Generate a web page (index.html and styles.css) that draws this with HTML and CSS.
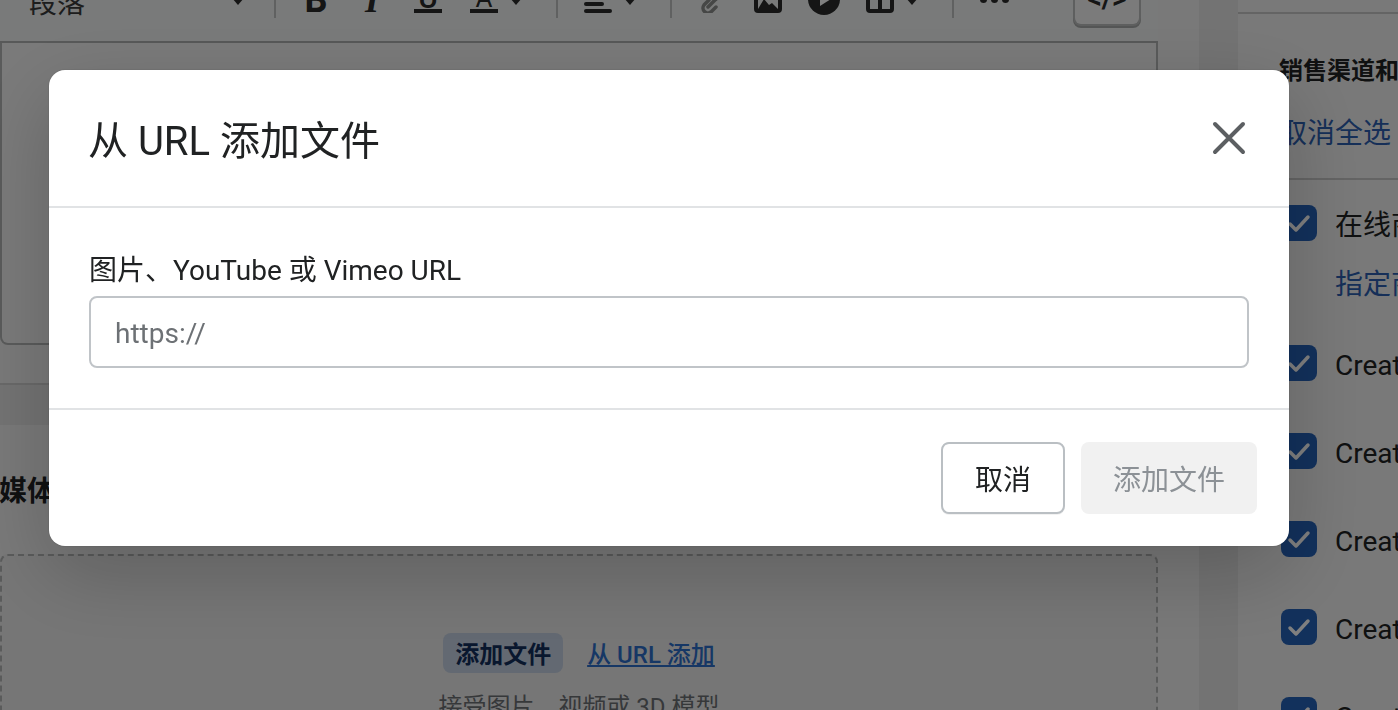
FILE: index.html
```html
<!DOCTYPE html>
<html lang="zh-CN">
<head>
    <meta charset="UTF-8">
    <meta name="viewport" content="width=device-width, initial-scale=1.0">
    <title>从 URL 添加文件</title>
    <link rel="stylesheet" href="styles.css">
</head>
<body>
    <div class="page">
        <div class="main">
            <div class="card card-top">
                <div class="editor">
                    <div class="toolbar">
                        <div class="select">
                            <span class="select-text">段落</span>
                            <span class="caret"></span>
                        </div>
                        <div class="sep"></div>

                        <div class="tool"><span class="glyph bold">B</span></div>
                        <div class="tool"><span class="glyph italic">I</span></div>
                        <div class="tool"><span class="glyph under">U</span></div>
                        <div class="tool tool-wide">
                            <span class="glyph under under-a">A</span>
                            <span class="caret caret-tool"></span>
                        </div>
                        <div class="sep"></div>

                        <div class="tool tool-wide">
                            <svg class="icon" width="28" height="32" viewBox="0 0 28 32" fill="#2a2b2b">
                                <rect x="0" y="14" width="28" height="4" rx="2"/>
                                <rect x="0" y="21" width="20" height="4" rx="2"/>
                                <rect x="0" y="28" width="28" height="4" rx="2"/>
                            </svg>
                            <span class="caret caret-tool"></span>
                        </div>
                        <div class="sep"></div>

                        <div class="tool">
                            <svg class="icon" width="26" height="32" viewBox="0 0 26 32" fill="none" stroke="#8c8e8d" stroke-width="3.5" stroke-linecap="round">
                                <path d="M10 19l-5 5a5 5 0 0 0 7 7l5-5"/>
                                <path d="M9 26l10-10"/>
                                <path d="M17 18l5-5"/>
                            </svg>
                        </div>
                        <div class="tool">
                            <svg class="icon" width="28" height="32" viewBox="0 0 28 32" fill="none" stroke="#2a2b2b" stroke-width="4">
                                <rect x="2" y="2" width="24" height="28" rx="2"/>
                                <path d="M4 28l6-10 5 6 3-2 6 6z" fill="#2a2b2b" stroke="none"/>
                            </svg>
                        </div>
                        <div class="tool">
                            <svg class="icon icon-low" width="32" height="32" viewBox="0 0 32 32">
                                <circle cx="16" cy="16" r="16" fill="#2a2b2b"/>
                                <path d="M12 9l11 7-11 7z" fill="#fff"/>
                            </svg>
                        </div>
                        <div class="tool tool-wide">
                            <svg class="icon" width="28" height="32" viewBox="0 0 28 32" fill="none" stroke="#2a2b2b" stroke-width="4">
                                <rect x="2" y="2" width="24" height="28" rx="2"/>
                                <path d="M14 2v28M2 10h24"/>
                            </svg>
                            <span class="caret caret-tool"></span>
                        </div>
                        <div class="sep"></div>

                        <div class="tool">
                            <div class="dots"><span></span><span></span><span></span></div>
                        </div>
                        <div class="code-btn"><span>&lt;/&gt;</span></div>
                    </div>
                </div>
            </div>

            <div class="card card-media">
                <h2 class="media-title">媒体</h2>
                <div class="dropzone">
                    <div class="drop-actions">
                        <span class="drop-add">添加文件</span>
                        <a href="#" class="drop-url">从 URL 添加</a>
                    </div>
                    <div class="drop-hint">接受图片、视频或 3D 模型</div>
                </div>
            </div>
        </div>

        <div class="aside">
            <div class="aside-top"></div>
            <div class="aside-head">
                <div class="aside-title">销售渠道和</div>
                <a href="#" class="aside-link">取消全选</a>
            </div>
            <div class="channels">
                <div class="channel">
                    <div class="check-row">
                        <span class="check"><svg width="36" height="36" viewBox="0 0 36 36"><path d="M9 19l6 6 12-13" fill="none" stroke="#fff" stroke-width="3.5" stroke-linecap="round" stroke-linejoin="round"/></svg></span>
                        <span class="check-text">在线商店</span>
                    </div>
                    <a href="#" class="channel-link">指定商品</a>
                </div>
                <div class="channel">
                    <div class="check-row">
                        <span class="check"><svg width="36" height="36" viewBox="0 0 36 36"><path d="M9 19l6 6 12-13" fill="none" stroke="#fff" stroke-width="3.5" stroke-linecap="round" stroke-linejoin="round"/></svg></span>
                        <span class="check-text">Create</span>
                    </div>
                </div>
                <div class="channel">
                    <div class="check-row">
                        <span class="check"><svg width="36" height="36" viewBox="0 0 36 36"><path d="M9 19l6 6 12-13" fill="none" stroke="#fff" stroke-width="3.5" stroke-linecap="round" stroke-linejoin="round"/></svg></span>
                        <span class="check-text">Create</span>
                    </div>
                </div>
                <div class="channel">
                    <div class="check-row">
                        <span class="check"><svg width="36" height="36" viewBox="0 0 36 36"><path d="M9 19l6 6 12-13" fill="none" stroke="#fff" stroke-width="3.5" stroke-linecap="round" stroke-linejoin="round"/></svg></span>
                        <span class="check-text">Create</span>
                    </div>
                </div>
                <div class="channel">
                    <div class="check-row">
                        <span class="check"><svg width="36" height="36" viewBox="0 0 36 36"><path d="M9 19l6 6 12-13" fill="none" stroke="#fff" stroke-width="3.5" stroke-linecap="round" stroke-linejoin="round"/></svg></span>
                        <span class="check-text">Create</span>
                    </div>
                </div>
                <div class="channel">
                    <div class="check-row">
                        <span class="check"><svg width="36" height="36" viewBox="0 0 36 36"><path d="M9 19l6 6 12-13" fill="none" stroke="#fff" stroke-width="3.5" stroke-linecap="round" stroke-linejoin="round"/></svg></span>
                        <span class="check-text">Create</span>
                    </div>
                </div>
            </div>
        </div>
    </div>

    <div class="overlay">
        <div class="modal">
            <div class="modal-head">
                <div class="modal-title">从 URL 添加文件</div>
                <svg class="modal-close" width="34" height="34" viewBox="0 0 34 34" fill="none" stroke="#5c5f62" stroke-width="4" stroke-linecap="round">
                    <path d="M3 3l28 28M31 3L3 31"/>
                </svg>
            </div>
            <div class="modal-body">
                <label class="modal-label" for="url">图片、YouTube 或 Vimeo URL</label>
                <input class="modal-input" id="url" type="text" placeholder="https://">
            </div>
            <div class="modal-foot">
                <button class="btn btn-cancel">取消</button>
                <button class="btn btn-add">添加文件</button>
            </div>
        </div>
    </div>
</body>
</html>
```

FILE: styles.css
```css
* {
box-sizing: border-box;
}

html, body {
height: 710px;
overflow: hidden;
}

body {
margin: 0;
background-color: #e6e6e6;
color: #202223;
font-family: Roboto, "Noto Sans CJK SC", sans-serif;
}

a {
text-decoration: none;
}

.page {
display: flex;
height: 710px;
overflow: hidden;
}

.main {
width: 1199px;
flex-shrink: 0;
}

.card {
background-color: #f3f3f3;
padding-right: 41px;
}

.card-top {
height: 385px;
border-bottom: 2px solid #d2d2d2;
}

.editor {
height: 345px;
border: 2px solid #b4b6b6;
border-top: none;
border-radius: 0 0 8px 8px;
background-color: #f5f5f5;
}

.toolbar {
display: flex;
align-items: flex-end;
height: 41px;
padding-bottom: 23px;
border-bottom: 0;
box-shadow: 0 2px 0 #b0b2b2;
background-color: #f3f5f4;
margin-left: -2px;
margin-right: -2px;
}

.select {
display: flex;
justify-content: space-between;
align-items: flex-end;
width: 274px;
padding: 0 30px 0 29px;
}

.select-text {
font-size: 28px;
line-height: 40px;
margin-bottom: -6px;
color: #3a3b3b;
}

.caret {
width: 0;
height: 0;
border-left: 6px solid transparent;
border-right: 6px solid transparent;
border-top: 7px solid #2a2b2b;
margin-bottom: 13px;
}

.caret-tool {
margin-left: 12px;
}

.sep {
width: 2px;
height: 40px;
margin: 0 12px 0 16px;
background-color: #c0c2c2;
}

.sep:nth-child(2) {
margin-left: 0;
}

.tool {
display: flex;
justify-content: center;
align-items: flex-end;
width: 56px;
height: 40px;
}

.tool-wide {
width: 84px;
justify-content: flex-start;
padding-left: 14px;
}

.icon {
display: block;
margin-bottom: 5px;
}

.icon-low {
margin-bottom: 3px;
}

.glyph {
font-size: 36px;
line-height: 36px;
height: 36px;
color: #2a2b2b;
}

.bold {
font-weight: 700;
margin-bottom: -3px;
height: 42px;
line-height: 42px;
}

.italic {
font-family: "Liberation Serif", serif;
font-weight: 700;
font-style: italic;
margin-bottom: -3px;
height: 42px;
line-height: 42px;
}

.under {
font-weight: 500;
font-size: 30px;
line-height: 30px;
height: 30px;
width: 28px;
text-align: center;
margin-bottom: 5px;
border-bottom: 4px solid #2a2b2b;
}

.under-a {
font-size: 26px;
font-weight: 400;
}

.dots {
display: flex;
gap: 4px;
margin-bottom: 15px;
}

.dots span {
width: 7px;
height: 7px;
border-radius: 50%;
background-color: #2a2b2b;
}

.code-btn {
display: flex;
justify-content: center;
align-items: flex-end;
width: 68px;
height: 40px;
margin-left: 51px;
margin-bottom: -8px;
padding-bottom: 10px;
border: 2px solid #bcbebe;
border-top: none;
border-radius: 8px;
box-shadow: 0 2px 0 #a8aaaa;
background-color: #f6f6f6;
font-size: 28px;
font-weight: 700;
line-height: 30px;
color: #2a2b2b;
}

.card-media {
height: 285px;
margin-top: 40px;
}

.media-title {
margin: 0 0 0 -1px;
padding-top: 49px;
font-size: 28px;
font-weight: 700;
line-height: 36px;
height: 129px;
}

.dropzone {
height: 200px;
border: 2px dashed #b4b6b6;
border-radius: 8px;
padding-top: 77px;
text-align: center;
background-color: #ececec;
}

.drop-actions {
display: flex;
justify-content: center;
align-items: center;
gap: 24px;
}

.drop-add {
width: 120px;
height: 40px;
border-radius: 8px;
background-color: #c6d2e4;
color: #122e5c;
font-size: 24px;
font-weight: 700;
line-height: 44px;
}

.drop-url {
color: #2c6ecb;
font-size: 24px;
font-weight: 500;
line-height: 32px;
margin-top: 4px;
text-decoration: underline;
}

.drop-hint {
margin-top: 14px;
font-size: 24px;
line-height: 40px;
color: #6d7175;
}

.aside {
flex: 1;
margin-left: 39px;
background-color: #f3f3f3;
padding-left: 41px;
white-space: nowrap;
overflow: hidden;
}

.aside-top {
height: 14px;
margin-left: -41px;
border-bottom: 2px solid #c8c8c8;
}

.aside-head {
height: 166px;
margin-left: -41px;
padding: 41px 0 0 41px;
border-bottom: 2px solid #c8c8c8;
}

.aside-title {
font-size: 24px;
font-weight: 700;
line-height: 32px;
}

.aside-link {
display: block;
margin-top: 27px;
font-size: 28px;
line-height: 40px;
color: #2c5fb0;
}

.channels {
padding: 25px 0 0 2px;
}

.channel {
margin-bottom: 52px;
}

.channel:first-child {
margin-bottom: 40px;
}

.check-row {
display: flex;
gap: 18px;
height: 36px;
}

.check {
width: 36px;
height: 36px;
flex-shrink: 0;
border-radius: 8px;
background-color: #2562b8;
}

.check svg {
display: block;
}

.check-text {
font-size: 28px;
line-height: 42px;
}

.channel-link {
display: block;
margin: 24px 0 0 54px;
font-size: 28px;
line-height: 40px;
color: #2c5fb0;
}

.overlay {
position: fixed;
top: 0;
left: 0;
right: 0;
bottom: 0;
display: flex;
align-items: flex-start;
padding: 70px 0 0 49px;
background-color: rgba(0, 0, 0, 0.5);
}

.modal {
width: 1240px;
height: 476px;
border-radius: 16px;
background-color: #fff;
box-shadow: 0 26px 80px rgba(0, 0, 0, 0.2), 0 0 2px rgba(0, 0, 0, 0.2);
}

.modal-head {
display: flex;
justify-content: space-between;
align-items: center;
height: 138px;
padding: 0 43px 0 39px;
border-bottom: 2px solid #e1e3e5;
}

.modal-title {
font-size: 40px;
line-height: 56px;
margin-top: 8px;
}

.modal-close {
display: block;
}

.modal-body {
height: 202px;
padding: 40px 40px 0;
border-bottom: 2px solid #e1e3e5;
}

.modal-label {
display: block;
height: 48px;
font-size: 28px;
line-height: 46px;
}

.modal-input {
display: block;
width: 100%;
height: 72px;
padding: 2px 24px 0;
border: 2px solid #c0c4c8;
border-radius: 8px;
outline: none;
font-family: inherit;
font-size: 28px;
color: #202223;
}

.modal-input::placeholder {
color: #6d7175;
}

.modal-foot {
display: flex;
justify-content: flex-end;
gap: 16px;
padding: 32px 32px 0 0;
}

.btn {
height: 72px;
border-radius: 8px;
font-family: inherit;
font-size: 28px;
}

.btn-cancel {
width: 124px;
border: 2px solid #babfc3;
background-color: #fff;
color: #202223;
box-shadow: 0 1px 0 rgba(0, 0, 0, 0.05);
}

.btn-add {
width: 176px;
border: none;
background-color: #f1f1f1;
color: #8c9196;
}
```
